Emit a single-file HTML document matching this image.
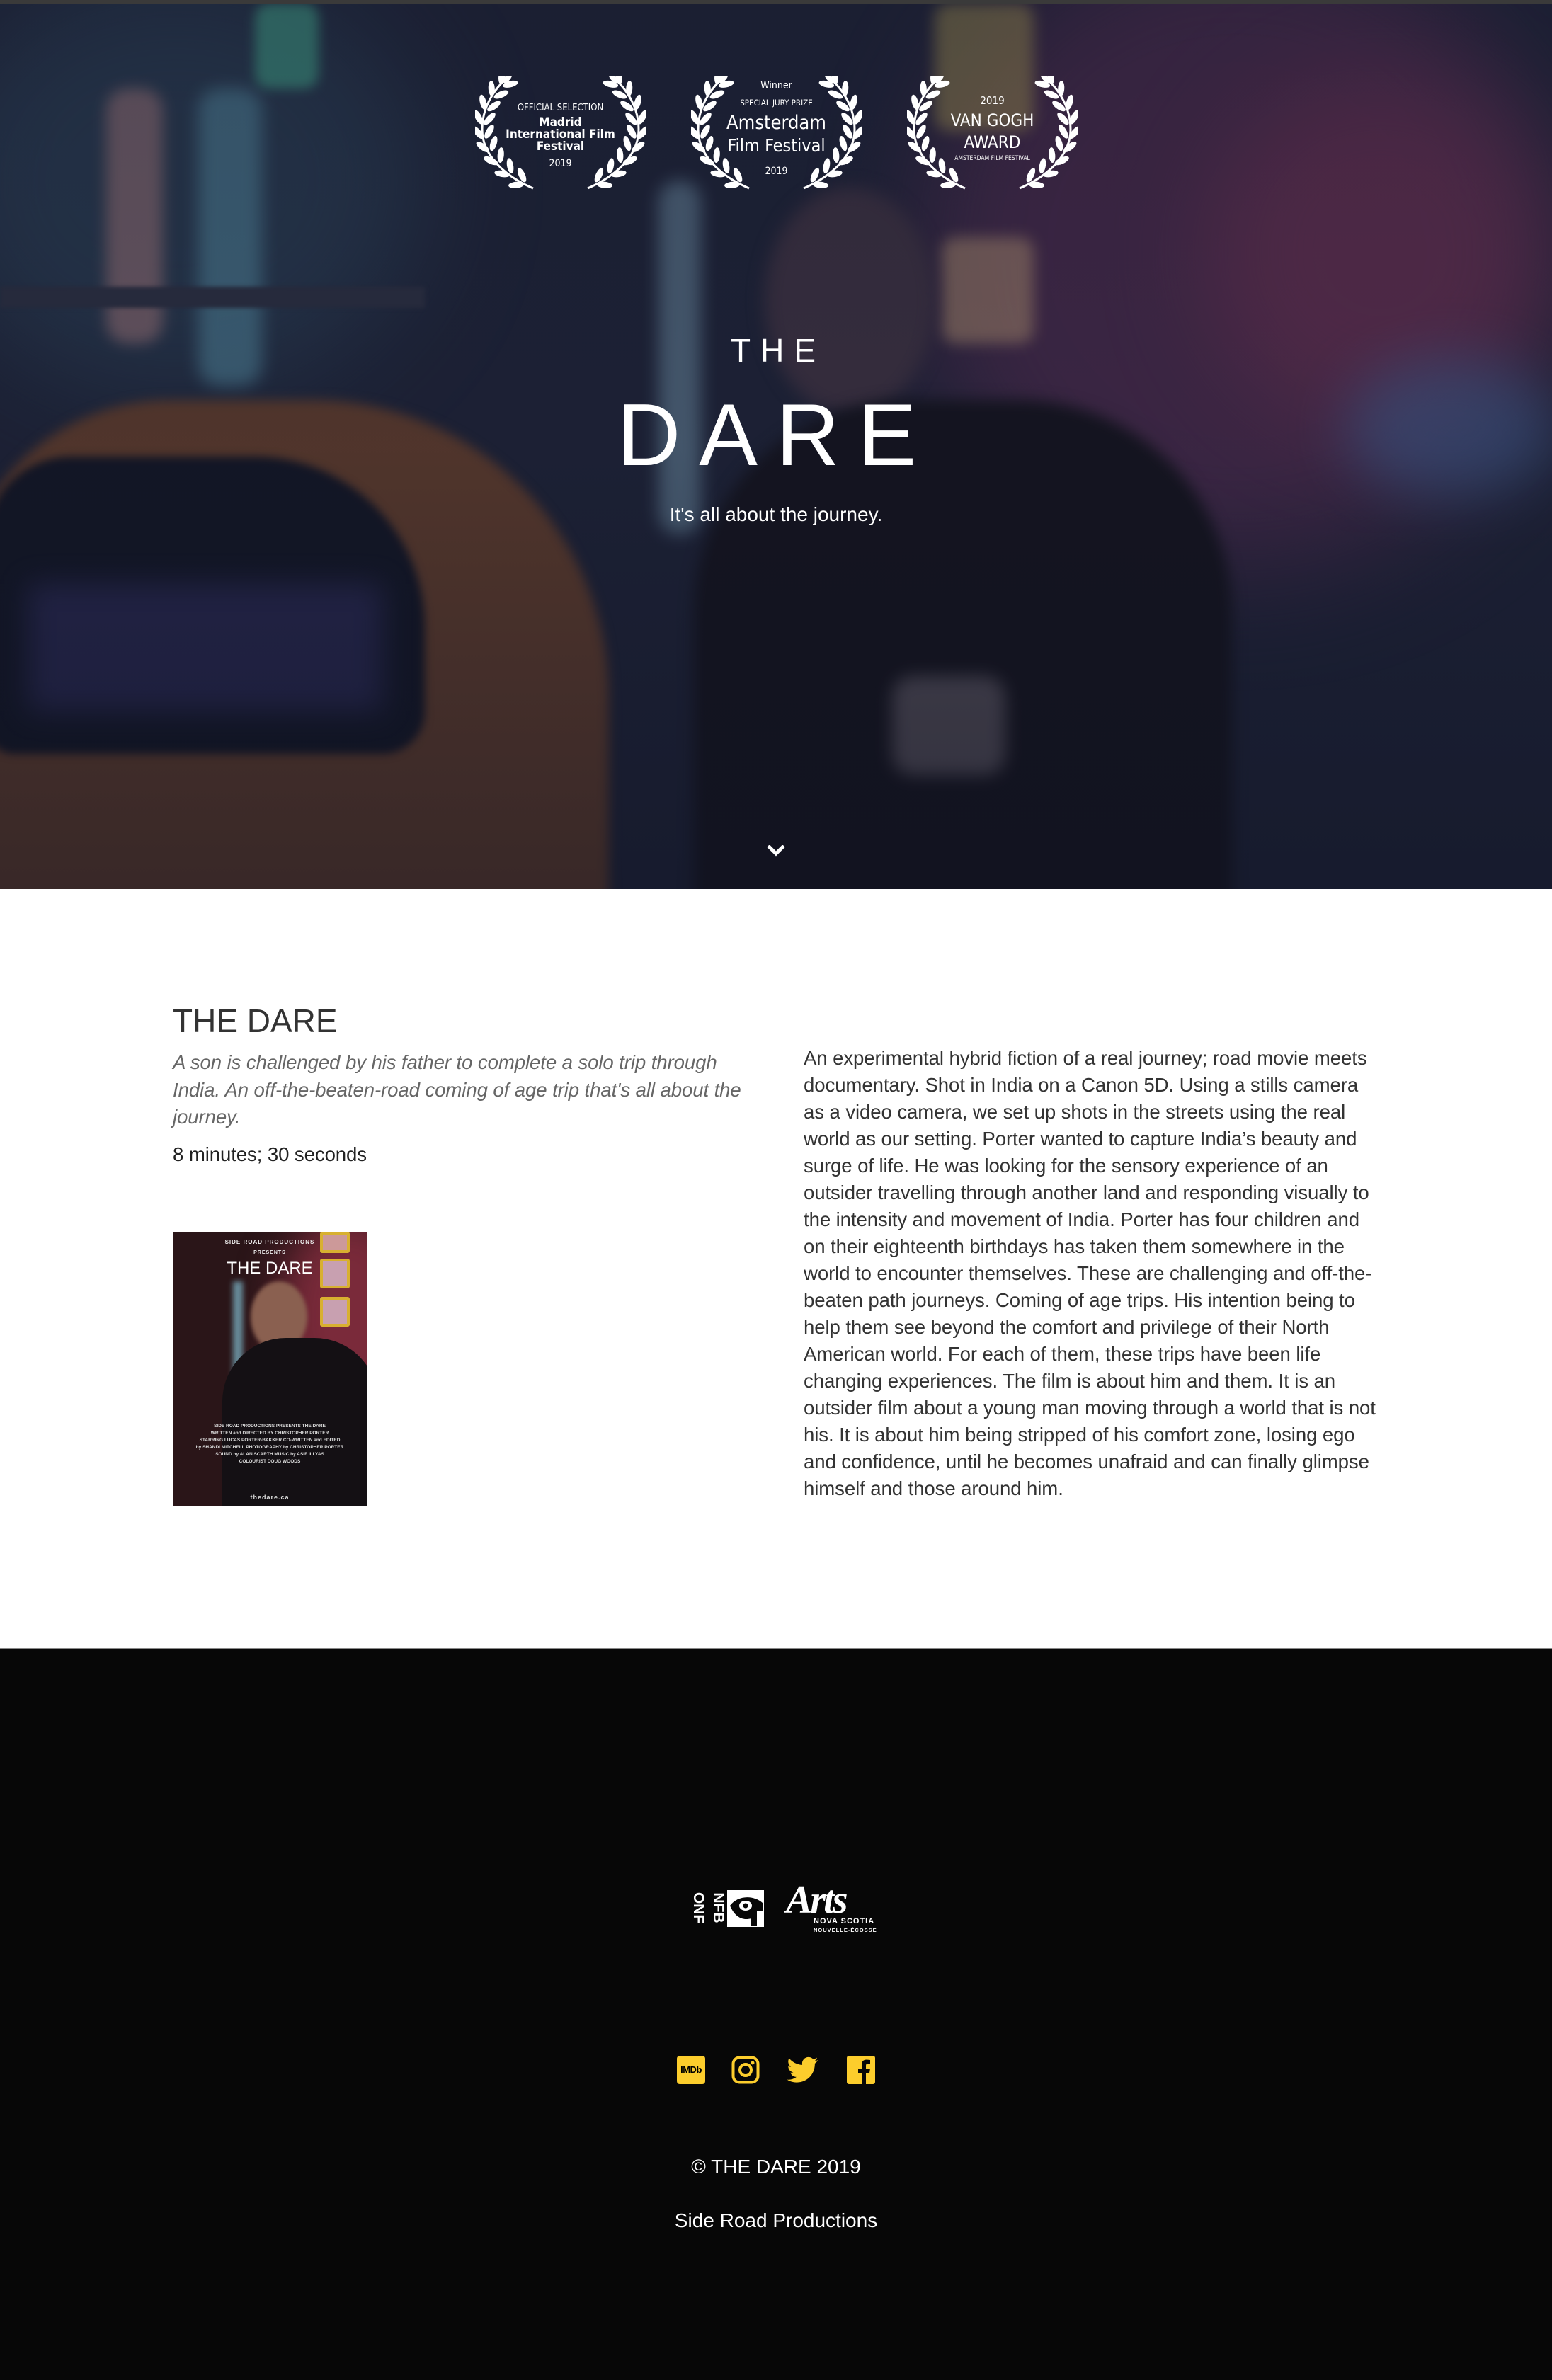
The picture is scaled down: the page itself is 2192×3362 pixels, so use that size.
<!DOCTYPE html>
<html><head><meta charset="utf-8">
<style>
*{margin:0;padding:0;box-sizing:border-box}
body{width:2192px;height:3362px;background:#fff;font-family:"Liberation Sans",Arial,sans-serif;position:relative;overflow:hidden}
.hero{position:absolute;left:0;top:0;width:2192px;height:1256px;overflow:hidden;background:#1d2236;border-top:5px solid #3a3a3a}
.b{position:absolute;border-radius:50%;filter:blur(30px)}
.abs{position:absolute}
.hero .t{position:absolute;left:0;width:2192px;text-align:center;color:#fff}
.lau{position:absolute;top:103px;width:241px;height:160px}
.lau .txt{position:absolute;left:0;width:241px;text-align:center;color:#fff;font-family:"DejaVu Sans Condensed","Liberation Sans",sans-serif}
.white{position:absolute;left:0;top:1256px;width:2192px;height:1072px;background:#fff}
.foot{position:absolute;left:0;top:2328px;width:2192px;height:1034px;background:#070707;border-top:2px solid #888}
.rt{position:absolute;left:1135px;top:220px;font-size:27.6px;line-height:38px;color:#333;white-space:nowrap;letter-spacing:-0.1px}
</style></head><body>
<div class="hero">
  <div class="b" style="left:1300px;top:-100px;width:900px;height:900px;background:#4a2a4c;opacity:.8;filter:blur(80px)"></div>
  <div class="b" style="left:1700px;top:100px;width:500px;height:500px;background:#6a3050;opacity:.6;filter:blur(70px)"></div>
  <div class="b" style="left:-100px;top:-50px;width:700px;height:600px;background:#2a3f55;opacity:.7;filter:blur(80px)"></div>
  <div class="b" style="left:150px;top:120px;width:80px;height:360px;background:#8a6a70;opacity:.7;border-radius:30px;filter:blur(10px)"></div>
  <div class="b" style="left:280px;top:120px;width:90px;height:420px;background:#4a7a90;opacity:.7;border-radius:30px;filter:blur(12px)"></div>
  <div class="b" style="left:360px;top:0px;width:90px;height:120px;background:#3a8a7a;opacity:.8;border-radius:20px;filter:blur(8px)"></div>
  <div class="b" style="left:930px;top:250px;width:60px;height:500px;background:#6a8aa0;opacity:.6;border-radius:30px;filter:blur(12px)"></div>
  <div class="b" style="left:1320px;top:0px;width:140px;height:180px;background:#a09050;opacity:.55;border-radius:20px;filter:blur(10px)"></div>
  <div class="b" style="left:1330px;top:330px;width:130px;height:150px;background:#b09070;opacity:.55;border-radius:20px;filter:blur(10px)"></div>
  <div class="b" style="left:1900px;top:500px;width:300px;height:200px;background:#3a5a8a;opacity:.6;filter:blur(40px)"></div>
  <div class="abs" style="left:-60px;top:560px;width:920px;height:800px;border-radius:300px 420px 0 0;background:#5a3a2c;filter:blur(8px)"></div>
  <div class="abs" style="left:-20px;top:640px;width:620px;height:420px;border-radius:120px 240px 60px 40px;background:#121625;filter:blur(6px)"></div>
  <div class="abs" style="left:40px;top:820px;width:500px;height:180px;background:#2a2a55;filter:blur(20px);opacity:.8"></div>
  <div class="abs" style="left:0;top:400px;width:600px;height:30px;background:#2a2e40;filter:blur(3px)"></div>
  <div class="abs" style="left:1080px;top:260px;width:240px;height:320px;border-radius:50%;background:#3a3040;filter:blur(12px)"></div>
  <div class="abs" style="left:980px;top:560px;width:760px;height:760px;border-radius:300px 300px 0 0;background:#14141e;filter:blur(10px)"></div>
  <div class="abs" style="left:1260px;top:950px;width:160px;height:140px;border-radius:30px;background:#5a5560;filter:blur(12px);opacity:.8"></div>
  <div class="abs" style="left:0;top:0;width:2192px;height:1256px;background:linear-gradient(180deg,rgba(20,22,40,.25),rgba(20,22,40,.15) 50%,rgba(15,18,35,.45))"></div>

  <svg width="0" height="0" style="position:absolute">
    <defs>
      <g id="lp">
        <ellipse cx="14" cy="0" rx="11" ry="4.5" transform="rotate(-55)" fill="#fff"/>
        <ellipse cx="14" cy="0" rx="11" ry="4.5" transform="rotate(-125)" fill="#fff"/>
      </g>
      <g id="half">
        <path d="M82 158 C40 140 10 110 10 75 C10 45 25 20 45 2" fill="none" stroke="#fff" stroke-width="3"/>
        <use href="#lp" transform="translate(72,152) rotate(-60)"/>
        <use href="#lp" transform="translate(52,140) rotate(-45)"/>
        <use href="#lp" transform="translate(35,125) rotate(-30)"/>
        <use href="#lp" transform="translate(22,108) rotate(-18)"/>
        <use href="#lp" transform="translate(13,90) rotate(-5)"/>
        <use href="#lp" transform="translate(11,70) rotate(8)"/>
        <use href="#lp" transform="translate(15,50) rotate(20)"/>
        <use href="#lp" transform="translate(24,31) rotate(32)"/>
        <use href="#lp" transform="translate(36,14) rotate(42)"/>
        <ellipse cx="46" cy="2" rx="9" ry="4" transform="rotate(-50 46 2)" fill="#fff"/>
      </g>
      <g id="laurel">
        <use href="#half"/>
        <use href="#half" transform="translate(241,0) scale(-1,1)"/>
      </g>
    </defs>
  </svg>
  <div class="lau" style="left:671px">
    <svg width="241" height="160" style="position:absolute;left:0;top:0"><use href="#laurel"/></svg>
    <div class="txt" style="top:37px;font-size:13px">OFFICIAL SELECTION</div>
    <div class="txt" style="top:57px;font-size:17px;font-weight:bold;line-height:17px">Madrid<br>International Film<br>Festival</div>
    <div class="txt" style="top:115px;font-size:14px">2019</div>
  </div>
  <div class="lau" style="left:976px">
    <svg width="241" height="160" style="position:absolute;left:0;top:0"><use href="#laurel"/></svg>
    <div class="txt" style="top:5px;font-size:14px">Winner</div>
    <div class="txt" style="top:30px;font-size:11.5px">SPECIAL JURY PRIZE</div>
    <div class="txt" style="top:50px;font-size:27px;line-height:32px">Amsterdam<br><span style="font-size:25px">Film Festival</span></div>
    <div class="txt" style="top:126px;font-size:14px">2019</div>
  </div>
  <div class="lau" style="left:1281px">
    <svg width="241" height="160" style="position:absolute;left:0;top:0"><use href="#laurel"/></svg>
    <div class="txt" style="top:25px;font-size:15px">2019</div>
    <div class="txt" style="top:47px;font-size:24px;line-height:31px">VAN GOGH<br>AWARD</div>
    <div class="txt" style="top:111px;font-size:8.5px">AMSTERDAM FILM FESTIVAL</div>
  </div>

  <div class="t" style="top:463px;font-size:46px;letter-spacing:14px;text-indent:6px">THE</div>
  <div class="t" style="top:540px;font-size:124px;letter-spacing:26px;text-indent:0px;line-height:140px">DARE</div>
  <div class="t" style="top:706px;font-size:28px">It's all about the journey.</div>
  <svg class="abs" style="left:1082px;top:1186px" width="28" height="20" viewBox="0 0 28 20"><path d="M3 4 L14 15 L25 4" fill="none" stroke="#fff" stroke-width="5"/></svg>
</div>

<div class="white">
  <div class="abs" style="left:244px;top:159px;font-size:46px;color:#333">THE DARE</div>
  <div class="abs" style="left:244px;top:226px;font-size:27.6px;line-height:38.5px;color:#666;font-style:italic;white-space:nowrap;letter-spacing:-0.1px">A son is challenged by his father to complete a solo trip through<br>India. An off-the-beaten-road coming of age trip that's all about the<br>journey.</div>
  <div class="abs" style="left:244px;top:359px;font-size:27.6px;color:#222;letter-spacing:-0.1px">8 minutes; 30 seconds</div>
  <div class="abs" style="left:244px;top:484px;width:274px;height:388px;overflow:hidden;background:#2a1518">
    <div class="b" style="left:150px;top:-30px;width:200px;height:300px;background:#7a2a3a;filter:blur(30px)"></div>
    <div class="abs" style="left:208px;top:0;width:42px;height:30px;border:4px solid #d8b030;background:#c99;border-radius:3px"></div>
    <div class="abs" style="left:208px;top:38px;width:42px;height:42px;border:4px solid #d8b030;background:#c8a0b0;border-radius:3px"></div>
    <div class="abs" style="left:208px;top:92px;width:42px;height:42px;border:4px solid #d8b030;background:#c8a0b0;border-radius:3px"></div>
    <div class="abs" style="left:85px;top:70px;width:14px;height:160px;background:#7ab;filter:blur(4px);opacity:.8"></div>
    <div class="abs" style="left:110px;top:70px;width:80px;height:100px;border-radius:50%;background:#8a6050;filter:blur(3px)"></div>
    <div class="abs" style="left:70px;top:150px;width:220px;height:260px;border-radius:90px 90px 0 0;background:#141014"></div>
    <div class="abs" style="left:0;top:10px;width:274px;text-align:center;color:#eee;font-size:8px;font-weight:bold;letter-spacing:1px">SIDE ROAD PRODUCTIONS</div>
    <div class="abs" style="left:0;top:26px;width:274px;text-align:center;color:#eee;font-size:7px;font-weight:bold;letter-spacing:1px">PRESENTS</div>
    <div class="abs" style="left:0;top:38px;width:274px;text-align:center;color:#fff;font-size:24px">THE DARE</div>
    <div class="abs" style="left:0;top:270px;width:274px;text-align:center;color:#ddd;font-size:6.5px;font-weight:bold;line-height:10px">SIDE ROAD PRODUCTIONS PRESENTS THE DARE<br>WRITTEN and DIRECTED BY CHRISTOPHER PORTER<br>STARRING LUCAS PORTER-BAKKER CO-WRITTEN and EDITED<br>by SHANDI MITCHELL PHOTOGRAPHY by CHRISTOPHER PORTER<br>SOUND by ALAN SCARTH MUSIC by ASIF ILLYAS<br>COLOURIST DOUG WOODS</div>
    <div class="abs" style="left:0;top:370px;width:274px;text-align:center;color:#ddd;font-size:9px;font-weight:bold;letter-spacing:1px">thedare.ca</div>
  </div>
  <div class="rt">An experimental hybrid fiction of a real journey; road movie meets<br>documentary. Shot in India on a Canon 5D. Using a stills camera<br>as a video camera, we set up shots in the streets using the real<br>world as our setting. Porter wanted to capture India’s beauty and<br>surge of life. He was looking for the sensory experience of an<br>outsider travelling through another land and responding visually to<br>the intensity and movement of India. Porter has four children and<br>on their eighteenth birthdays has taken them somewhere in the<br>world to encounter themselves. These are challenging and off-the-<br>beaten path journeys. Coming of age trips. His intention being to<br>help them see beyond the comfort and privilege of their North<br>American world. For each of them, these trips have been life<br>changing experiences. The film is about him and them. It is an<br>outsider film about a young man moving through a world that is not<br>his. It is about him being stripped of his comfort zone, losing ego<br>and confidence, until he becomes unafraid and can finally glimpse<br>himself and those around him.</div>
</div>

<div class="foot">
  <div class="abs" style="left:970px;top:340px;width:110px;height:52px">
    <div class="abs" style="left:-10px;top:14px;transform:rotate(90deg);color:#fff;font-weight:bold;font-size:21px;line-height:22px;width:52px;text-align:center">ONF</div>
    <div class="abs" style="left:18px;top:14px;transform:rotate(90deg);color:#fff;font-weight:bold;font-size:21px;line-height:22px;width:52px;text-align:center">NFB</div>
    <div class="abs" style="left:57px;top:0;width:52px;height:52px;background:#fff"></div>
    <svg class="abs" style="left:57px;top:0" width="52" height="52"><path d="M4 22 C14 8 36 6 50 18 L50 30 L42 30 L42 50 L34 50 L34 40 C20 44 10 36 4 22Z" fill="#070707"/><ellipse cx="26" cy="22" rx="9" ry="7" fill="#fff"/><circle cx="26" cy="22" r="3.5" fill="#070707"/></svg>
  </div>
  <div class="abs" style="left:1110px;top:322px;color:#fff;font-family:'Liberation Serif',serif;font-style:italic;font-weight:bold;font-size:56px;letter-spacing:-3px">Arts</div>
  <div class="abs" style="left:1149px;top:378px;color:#fff;font-size:11px;font-weight:bold;letter-spacing:1px;line-height:12px">NOVA SCOTIA<br><span style="font-size:7.5px">NOUVELLE-ÉCOSSE</span></div>
  <div class="abs" style="left:956px;top:574px;width:40px;height:40px;background:#fccd2c;border-radius:4px;color:#000;font-weight:bold;font-size:13px;line-height:40px;text-align:center;letter-spacing:-0.5px">IMDb</div>
  <svg class="abs" style="left:1033px;top:574px" width="40" height="40" viewBox="0 0 40 40"><rect x="2.5" y="2.5" width="35" height="35" rx="9" fill="none" stroke="#fccd2c" stroke-width="4"/><circle cx="20" cy="20" r="8" fill="none" stroke="#fccd2c" stroke-width="4"/><circle cx="30" cy="10" r="2.5" fill="#fccd2c"/></svg>
  <svg class="abs" style="left:1112px;top:575px" width="44" height="38" viewBox="0 0 24 20"><path d="M23.6 2.4c-.9.4-1.8.6-2.8.8 1-.6 1.8-1.6 2.1-2.7-.9.6-2 1-3.1 1.2C19 .7 17.7.1 16.3.1c-2.7 0-4.9 2.2-4.9 4.9 0 .4 0 .8.1 1.1C7.4 5.9 3.8 4 1.4 1 1 1.7.7 2.6.7 3.5c0 1.7.9 3.2 2.2 4.1-.8 0-1.6-.2-2.2-.6v.1c0 2.4 1.7 4.4 3.9 4.8-.4.1-.8.2-1.3.2-.3 0-.6 0-.9-.1.6 2 2.4 3.4 4.6 3.4-1.7 1.3-3.8 2.1-6.1 2.1-.4 0-.8 0-1.2-.1 2.2 1.4 4.8 2.2 7.5 2.2 9.1 0 14-7.5 14-14v-.6c1-.7 1.8-1.6 2.4-2.6z" fill="#fccd2c"/></svg>
  <svg class="abs" style="left:1196px;top:574px" width="40" height="40" viewBox="0 0 40 40"><rect width="40" height="40" rx="3" fill="#fccd2c"/><path d="M27 40 V24 H32 L33 18 H27 V14 C27 12 28 11 30 11 H33 V6 C32 6 30 5.5 28 5.5 C23.5 5.5 21 8 21 13 V18 H16 V24 H21 V40Z" fill="#070707"/></svg>
  <div class="abs" style="left:0;top:715px;width:2192px;text-align:center;color:#fff;font-size:28px">© THE DARE 2019</div>
  <div class="abs" style="left:0;top:791px;width:2192px;text-align:center;color:#fff;font-size:28px">Side Road Productions</div>
</div>
</body></html>
